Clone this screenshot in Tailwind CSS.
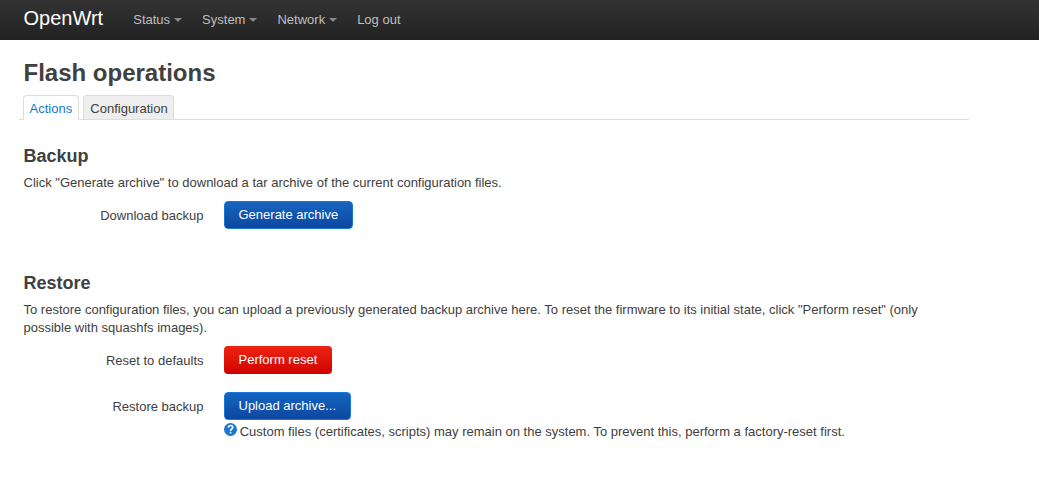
<!DOCTYPE html>
<html lang="en">
<head>
<meta charset="utf-8">
<title>OpenWrt - Flash operations</title>
<script src="https://cdn.jsdelivr.net/npm/@tailwindcss/browser@4"></script>
</head>
<body class="bg-white text-[#404040] font-['Liberation_Sans',Arial,sans-serif] text-[13px] leading-[18px] h-[486px] overflow-hidden">
<header class="h-10 flex items-center pl-[23.5px] bg-linear-to-b from-[#333] to-[#222] text-[#bfbfbf]">
  <a class="text-white text-[20px] leading-5 w-[109.75px] pb-[5px]">OpenWrt</a>
  <nav class="flex gap-5 pb-px">
    <a class="flex items-center gap-1">Status<i class="block mt-px border-x-4 border-t-4 border-x-transparent border-t-[#888]"></i></a>
    <a class="flex items-center gap-1">System<i class="block mt-px border-x-4 border-t-4 border-x-transparent border-t-[#888]"></i></a>
    <a class="flex items-center gap-1">Network<i class="block mt-px border-x-4 border-t-4 border-x-transparent border-t-[#888]"></i></a>
    <a>Log out</a>
  </nav>
</header>
<main class="w-[969px] pt-[15px]">
  <h2 class="pl-[23.5px] text-[24px] leading-9 font-bold">Flash operations</h2>
  <ul class="ml-[19px] mt-1 h-[25px] flex gap-1 pl-1 border-b border-[#ddd]">
    <li class="h-[25px] w-14 rounded-t border border-b-0 border-[#ddd] bg-white text-[#1976d2] pl-[5.5px] pt-1">Actions</li>
    <li class="h-6 w-[91px] rounded-t border border-b-0 border-[#ddd] bg-[#eee] pl-[6.3px] pt-1">Configuration</li>
  </ul>
  <section class="pl-[23.5px] pt-[18px]">
    <h3 class="text-[18px] leading-9 font-bold">Backup</h3>
    <p>Click "Generate archive" to download a tar archive of the current configuration files.</p>
    <div class="flex mt-[9px]">
      <label class="w-[180px] text-right pt-[6px]">Download backup</label>
      <button class="ml-[20.5px] h-7 w-[129px] rounded border border-[#1976d2] bg-linear-to-b from-[#1565c0] to-[#0d47a1] text-white text-left pl-[13.5px]">Generate archive</button>
    </div>
  </section>
  <section class="pl-[23.5px] pt-9">
    <h3 class="text-[18px] leading-9 font-bold">Restore</h3>
    <p class="w-[920px]">To restore configuration files, you can upload a previously generated backup archive here. To reset the firmware to its initial state, click "Perform reset" (only possible with squashfs images).</p>
    <div class="flex mt-[9px]">
      <label class="w-[180px] text-right pt-[6px]">Reset to defaults</label>
      <button class="ml-[20.5px] h-7 w-[108px] rounded bg-linear-to-b from-[#ee2211] to-[#d00000] text-white text-left pl-[14.5px]">Perform reset</button>
    </div>
    <div class="flex mt-[18px]">
      <label class="w-[180px] text-right pt-[6px]">Restore backup</label>
      <div class="ml-[20.5px]">
        <button class="block h-7 w-[127px] rounded border border-[#1976d2] bg-linear-to-b from-[#1565c0] to-[#0d47a1] text-white text-left pl-[13.5px]">Upload archive...</button>
        <div class="flex mt-[3px] gap-[2.7px]">
          <svg class="w-[13px] h-[13px]" viewBox="0 0 13 13"><circle cx="6.5" cy="6.5" r="6.5" fill="#1976d2"/><path d="M4.3 4.6c.1-1.5 1-2.1 2.2-2.1 1.3 0 2.2.7 2.2 1.9 0 1.6-2.1 1.6-2.1 3.5" fill="none" stroke="#fff" stroke-width="1.6"/><path d="M5.7 8.8h1.7v1.7H5.7z" fill="#fff"/></svg>
          <span>Custom files (certificates, scripts) may remain on the system. To prevent this, perform a factory-reset first.</span>
        </div>
      </div>
    </div>
  </section>
</main>
</body>
</html>
